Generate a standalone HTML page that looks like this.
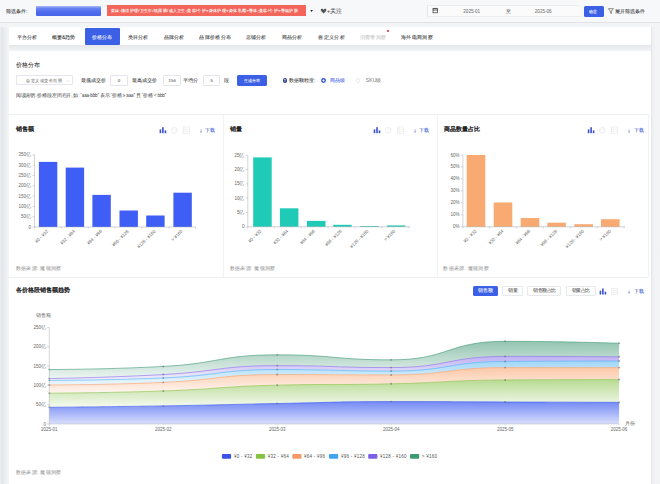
<!DOCTYPE html>
<html><head><meta charset="utf-8">
<style>
*{margin:0;padding:0;box-sizing:border-box}
html,body{width:660px;height:484px;overflow:hidden}
body{background:#f3f4f6;font-family:"Liberation Sans",sans-serif;position:relative;color:#333}
.a{position:absolute;white-space:nowrap}
.t{line-height:1}
</style></head><body>
<div class="a" style="left:0px;top:0px;width:660px;height:23px;background:#f7f8f9;border-bottom:1px solid #dfe1e6"></div>
<div class="a" style="left:36.2px;top:5.6px;width:64.8px;height:10.9px;background:linear-gradient(#a9b9f6,#6682f1 25%,#4f6cef 60%,#4a67ea);border-radius:1px;filter:blur(0.35px)"></div>
<div class="a" style="left:107px;top:5px;width:199px;height:11px;background:#f2665c"></div>
<div class="a" style="left:427.2px;top:5px;width:153px;height:12px;background:#fbfbfc;border-left:0.5px solid #e4e6e9;border-top:0.5px solid #eceef0;border-bottom:0.5px solid #eceef0"></div>
<div class="a" style="left:584px;top:6px;width:20px;height:10.5px;background:#3b5fe5;border-radius:1.5px"></div>
<div class="a" style="left:651px;top:27px;width:9px;height:457px;background:linear-gradient(to right,#e3e5e9,#eceef1 1.5px,#f2f3f5 3px,#f3f4f6)"></div>
<div class="a" style="left:0px;top:27px;width:9px;height:457px;background:linear-gradient(to right,#eef0f3,#e3e5ea 2px,#eceef1 5px,#f4f5f7 9px)"></div>
<div class="a" style="left:9px;top:27px;width:642px;height:18px;background:#fff"></div>
<div class="a" style="left:84.5px;top:28.4px;width:35.5px;height:16.5px;background:#3b5fe5;border-radius:1px"></div>
<div class="a" style="left:387px;top:30.2px;width:2px;height:2px;border-radius:1px;background:#d0243a"></div>
<div class="a" style="left:9px;top:45px;width:642px;height:5.8px;background:linear-gradient(#e5e6ea,#f3f4f6)"></div>
<div class="a" style="left:9px;top:50.8px;width:642px;height:434px;background:#fff"></div>
<div class="a" style="left:15.8px;top:75.4px;width:57px;height:10px;border:0.5px solid #e4e6eb;border-radius:1px"></div>
<div class="a" style="left:110.4px;top:75.3px;width:18px;height:10.3px;border:0.5px solid #e4e6eb;border-radius:1px"></div>
<div class="a" style="left:162.7px;top:75.3px;width:18px;height:10.3px;border:0.5px solid #e4e6eb;border-radius:1px"></div>
<div class="a" style="left:202.7px;top:75.3px;width:17.7px;height:10.3px;border:0.5px solid #e4e6eb;border-radius:1px"></div>
<div class="a" style="left:237.3px;top:75.3px;width:29.6px;height:10.3px;background:#3b5fe5;border-radius:1.5px"></div>
<div class="a" style="left:282.7px;top:78.2px;width:4.4px;height:4.4px;border-radius:50%;background:#2b3d8f"></div>
<div class="a" style="left:320.8px;top:78.0px;width:4.8px;height:4.8px;border-radius:50%;background:radial-gradient(circle,#fff 0,#fff 0.8px,#3d5fe0 1.2px)"></div>
<div class="a" style="left:355.6px;top:78.0px;width:4.7px;height:4.7px;border-radius:50%;border:0.5px solid #ececec"></div>
<div class="a" style="left:9px;top:114.3px;width:639px;height:0.6px;background:#eff0f3"></div>
<div class="a" style="left:9px;top:276.7px;width:639px;height:0.6px;background:#eff0f3"></div>
<div class="a" style="left:222.8px;top:114.3px;width:0.6px;height:162.6px;background:#f1f2f4"></div>
<div class="a" style="left:436.9px;top:114.3px;width:0.6px;height:162.6px;background:#f1f2f4"></div>
<div class="a" style="left:647.6px;top:114.3px;width:0.6px;height:162.6px;background:#f1f2f4"></div>
<div class="a" style="left:473px;top:285.6px;width:25.4px;height:10px;background:#3b5fe5;border-radius:1.5px"></div>
<div class="a" style="left:502.4px;top:285.6px;width:20.6px;height:10px;border:0.5px solid #e8e9ec;border-radius:1px"></div>
<div class="a" style="left:527.4px;top:285.6px;width:34px;height:10px;border:0.5px solid #e8e9ec;border-radius:1px"></div>
<div class="a" style="left:566px;top:285.6px;width:29.6px;height:10px;border:0.5px solid #e8e9ec;border-radius:1px"></div>
<svg class="a" style="left:0;top:0" width="660" height="484" viewBox="0 0 660 484" font-family="Liberation Sans, sans-serif">
<line x1="34.5" y1="154.8" x2="34.5" y2="227" stroke="#a0a4aa" stroke-width="0.45"/>
<line x1="32.5" y1="227.00" x2="34.5" y2="227.00" stroke="#a0a4aa" stroke-width="0.45"/>
<text x="31.1" y="228.50" text-anchor="end" font-size="4.5" fill="#666">0</text>
<line x1="32.5" y1="216.69" x2="34.5" y2="216.69" stroke="#a0a4aa" stroke-width="0.45"/>
<text x="31.1" y="218.19" text-anchor="end" font-size="4.5" fill="#666">50亿</text>
<line x1="32.5" y1="206.37" x2="34.5" y2="206.37" stroke="#a0a4aa" stroke-width="0.45"/>
<text x="31.1" y="207.87" text-anchor="end" font-size="4.5" fill="#666">100亿</text>
<line x1="32.5" y1="196.06" x2="34.5" y2="196.06" stroke="#a0a4aa" stroke-width="0.45"/>
<text x="31.1" y="197.56" text-anchor="end" font-size="4.5" fill="#666">150亿</text>
<line x1="32.5" y1="185.74" x2="34.5" y2="185.74" stroke="#a0a4aa" stroke-width="0.45"/>
<text x="31.1" y="187.24" text-anchor="end" font-size="4.5" fill="#666">200亿</text>
<line x1="32.5" y1="175.43" x2="34.5" y2="175.43" stroke="#a0a4aa" stroke-width="0.45"/>
<text x="31.1" y="176.93" text-anchor="end" font-size="4.5" fill="#666">250亿</text>
<line x1="32.5" y1="165.11" x2="34.5" y2="165.11" stroke="#a0a4aa" stroke-width="0.45"/>
<text x="31.1" y="166.61" text-anchor="end" font-size="4.5" fill="#666">300亿</text>
<line x1="32.5" y1="154.80" x2="34.5" y2="154.80" stroke="#a0a4aa" stroke-width="0.45"/>
<text x="31.1" y="156.30" text-anchor="end" font-size="4.5" fill="#666">350亿</text>
<rect x="38.9" y="161.9" width="18.4" height="65.10" fill="#3f5ef5"/>
<rect x="65.7" y="167.6" width="18.4" height="59.40" fill="#3f5ef5"/>
<rect x="92.4" y="194.9" width="18.4" height="32.10" fill="#3f5ef5"/>
<rect x="119.5" y="210.5" width="18.4" height="16.50" fill="#3f5ef5"/>
<rect x="146.2" y="215.5" width="18.4" height="11.50" fill="#3f5ef5"/>
<rect x="173.4" y="192.7" width="18.4" height="34.30" fill="#3f5ef5"/>
<line x1="34.5" y1="227" x2="196" y2="227" stroke="#a0a4aa" stroke-width="0.5"/>
<line x1="34.50" y1="227" x2="34.50" y2="228.5" stroke="#a0a4aa" stroke-width="0.45"/>
<line x1="61.35" y1="227" x2="61.35" y2="228.5" stroke="#a0a4aa" stroke-width="0.45"/>
<line x1="88.20" y1="227" x2="88.20" y2="228.5" stroke="#a0a4aa" stroke-width="0.45"/>
<line x1="115.05" y1="227" x2="115.05" y2="228.5" stroke="#a0a4aa" stroke-width="0.45"/>
<line x1="141.90" y1="227" x2="141.90" y2="228.5" stroke="#a0a4aa" stroke-width="0.45"/>
<line x1="168.75" y1="227" x2="168.75" y2="228.5" stroke="#a0a4aa" stroke-width="0.45"/>
<line x1="195.60" y1="227" x2="195.60" y2="228.5" stroke="#a0a4aa" stroke-width="0.45"/>
<text transform="translate(48.52,231.6) rotate(-45)" text-anchor="end" font-size="4.5" fill="#666">¥0 - ¥32</text>
<text transform="translate(75.38,231.6) rotate(-45)" text-anchor="end" font-size="4.5" fill="#666">¥32 - ¥64</text>
<text transform="translate(102.22,231.6) rotate(-45)" text-anchor="end" font-size="4.5" fill="#666">¥64 - ¥96</text>
<text transform="translate(129.08,231.6) rotate(-45)" text-anchor="end" font-size="4.5" fill="#666">¥96 - ¥128</text>
<text transform="translate(155.92,231.6) rotate(-45)" text-anchor="end" font-size="4.5" fill="#666">¥128 - ¥160</text>
<text transform="translate(182.78,231.6) rotate(-45)" text-anchor="end" font-size="4.5" fill="#666">&gt; ¥160</text>
<line x1="247.8" y1="155.2" x2="247.8" y2="226.8" stroke="#a0a4aa" stroke-width="0.45"/>
<line x1="245.8" y1="226.80" x2="247.8" y2="226.80" stroke="#a0a4aa" stroke-width="0.45"/>
<text x="244.4" y="228.30" text-anchor="end" font-size="4.5" fill="#666">0</text>
<line x1="245.8" y1="212.48" x2="247.8" y2="212.48" stroke="#a0a4aa" stroke-width="0.45"/>
<text x="244.4" y="213.98" text-anchor="end" font-size="4.5" fill="#666">5亿</text>
<line x1="245.8" y1="198.16" x2="247.8" y2="198.16" stroke="#a0a4aa" stroke-width="0.45"/>
<text x="244.4" y="199.66" text-anchor="end" font-size="4.5" fill="#666">10亿</text>
<line x1="245.8" y1="183.84" x2="247.8" y2="183.84" stroke="#a0a4aa" stroke-width="0.45"/>
<text x="244.4" y="185.34" text-anchor="end" font-size="4.5" fill="#666">15亿</text>
<line x1="245.8" y1="169.52" x2="247.8" y2="169.52" stroke="#a0a4aa" stroke-width="0.45"/>
<text x="244.4" y="171.02" text-anchor="end" font-size="4.5" fill="#666">20亿</text>
<line x1="245.8" y1="155.20" x2="247.8" y2="155.20" stroke="#a0a4aa" stroke-width="0.45"/>
<text x="244.4" y="156.70" text-anchor="end" font-size="4.5" fill="#666">25亿</text>
<rect x="253.2" y="157.4" width="18.5" height="69.40" fill="#1fcab6"/>
<rect x="279.9" y="208.3" width="18.5" height="18.50" fill="#1fcab6"/>
<rect x="307" y="220.9" width="18.5" height="5.90" fill="#1fcab6"/>
<rect x="333.2" y="224.8" width="18.5" height="2.00" fill="#1fcab6"/>
<rect x="360.2" y="226" width="18.5" height="0.80" fill="#1fcab6"/>
<rect x="386.9" y="225.4" width="18.5" height="1.40" fill="#1fcab6"/>
<line x1="247.8" y1="226.8" x2="410.4" y2="226.8" stroke="#a0a4aa" stroke-width="0.5"/>
<line x1="247.80" y1="226.8" x2="247.80" y2="228.3" stroke="#a0a4aa" stroke-width="0.45"/>
<line x1="274.55" y1="226.8" x2="274.55" y2="228.3" stroke="#a0a4aa" stroke-width="0.45"/>
<line x1="301.30" y1="226.8" x2="301.30" y2="228.3" stroke="#a0a4aa" stroke-width="0.45"/>
<line x1="328.05" y1="226.8" x2="328.05" y2="228.3" stroke="#a0a4aa" stroke-width="0.45"/>
<line x1="354.80" y1="226.8" x2="354.80" y2="228.3" stroke="#a0a4aa" stroke-width="0.45"/>
<line x1="381.55" y1="226.8" x2="381.55" y2="228.3" stroke="#a0a4aa" stroke-width="0.45"/>
<line x1="408.30" y1="226.8" x2="408.30" y2="228.3" stroke="#a0a4aa" stroke-width="0.45"/>
<text transform="translate(261.78,231.4) rotate(-45)" text-anchor="end" font-size="4.5" fill="#666">¥0 - ¥32</text>
<text transform="translate(288.53,231.4) rotate(-45)" text-anchor="end" font-size="4.5" fill="#666">¥32 - ¥64</text>
<text transform="translate(315.28,231.4) rotate(-45)" text-anchor="end" font-size="4.5" fill="#666">¥64 - ¥96</text>
<text transform="translate(342.03,231.4) rotate(-45)" text-anchor="end" font-size="4.5" fill="#666">¥96 - ¥128</text>
<text transform="translate(368.78,231.4) rotate(-45)" text-anchor="end" font-size="4.5" fill="#666">¥128 - ¥160</text>
<text transform="translate(395.53,231.4) rotate(-45)" text-anchor="end" font-size="4.5" fill="#666">&gt; ¥160</text>
<line x1="462.9" y1="155" x2="462.9" y2="226.8" stroke="#a0a4aa" stroke-width="0.45"/>
<line x1="460.9" y1="226.80" x2="462.9" y2="226.80" stroke="#a0a4aa" stroke-width="0.45"/>
<text x="459.5" y="228.30" text-anchor="end" font-size="4.5" fill="#666">0%</text>
<line x1="460.9" y1="214.83" x2="462.9" y2="214.83" stroke="#a0a4aa" stroke-width="0.45"/>
<text x="459.5" y="216.33" text-anchor="end" font-size="4.5" fill="#666">10%</text>
<line x1="460.9" y1="202.87" x2="462.9" y2="202.87" stroke="#a0a4aa" stroke-width="0.45"/>
<text x="459.5" y="204.37" text-anchor="end" font-size="4.5" fill="#666">20%</text>
<line x1="460.9" y1="190.90" x2="462.9" y2="190.90" stroke="#a0a4aa" stroke-width="0.45"/>
<text x="459.5" y="192.40" text-anchor="end" font-size="4.5" fill="#666">30%</text>
<line x1="460.9" y1="178.93" x2="462.9" y2="178.93" stroke="#a0a4aa" stroke-width="0.45"/>
<text x="459.5" y="180.43" text-anchor="end" font-size="4.5" fill="#666">40%</text>
<line x1="460.9" y1="166.97" x2="462.9" y2="166.97" stroke="#a0a4aa" stroke-width="0.45"/>
<text x="459.5" y="168.47" text-anchor="end" font-size="4.5" fill="#666">50%</text>
<line x1="460.9" y1="155.00" x2="462.9" y2="155.00" stroke="#a0a4aa" stroke-width="0.45"/>
<text x="459.5" y="156.50" text-anchor="end" font-size="4.5" fill="#666">60%</text>
<rect x="466.7" y="155" width="18.6" height="71.80" fill="#f8aa72"/>
<rect x="493.7" y="202.5" width="18.6" height="24.30" fill="#f8aa72"/>
<rect x="520.7" y="218" width="18.6" height="8.80" fill="#f8aa72"/>
<rect x="547.3" y="222.7" width="18.6" height="4.10" fill="#f8aa72"/>
<rect x="574.3" y="224.2" width="18.6" height="2.60" fill="#f8aa72"/>
<rect x="601" y="219.2" width="18.6" height="7.60" fill="#f8aa72"/>
<line x1="462.9" y1="226.8" x2="625" y2="226.8" stroke="#a0a4aa" stroke-width="0.5"/>
<line x1="462.90" y1="226.8" x2="462.90" y2="228.3" stroke="#a0a4aa" stroke-width="0.45"/>
<line x1="489.75" y1="226.8" x2="489.75" y2="228.3" stroke="#a0a4aa" stroke-width="0.45"/>
<line x1="516.60" y1="226.8" x2="516.60" y2="228.3" stroke="#a0a4aa" stroke-width="0.45"/>
<line x1="543.45" y1="226.8" x2="543.45" y2="228.3" stroke="#a0a4aa" stroke-width="0.45"/>
<line x1="570.30" y1="226.8" x2="570.30" y2="228.3" stroke="#a0a4aa" stroke-width="0.45"/>
<line x1="597.15" y1="226.8" x2="597.15" y2="228.3" stroke="#a0a4aa" stroke-width="0.45"/>
<line x1="624.00" y1="226.8" x2="624.00" y2="228.3" stroke="#a0a4aa" stroke-width="0.45"/>
<text transform="translate(476.93,231.4) rotate(-45)" text-anchor="end" font-size="4.5" fill="#666">¥0 - ¥32</text>
<text transform="translate(503.77,231.4) rotate(-45)" text-anchor="end" font-size="4.5" fill="#666">¥32 - ¥64</text>
<text transform="translate(530.62,231.4) rotate(-45)" text-anchor="end" font-size="4.5" fill="#666">¥64 - ¥96</text>
<text transform="translate(557.48,231.4) rotate(-45)" text-anchor="end" font-size="4.5" fill="#666">¥96 - ¥128</text>
<text transform="translate(584.33,231.4) rotate(-45)" text-anchor="end" font-size="4.5" fill="#666">¥128 - ¥160</text>
<text transform="translate(611.18,231.4) rotate(-45)" text-anchor="end" font-size="4.5" fill="#666">&gt; ¥160</text>
<defs>
<linearGradient id="g0" x1="0" y1="0" x2="0" y2="1"><stop offset="0" stop-color="#3d5cf0" stop-opacity="0.72"/><stop offset="1" stop-color="#3d5cf0" stop-opacity="0.2"/></linearGradient>
<linearGradient id="g1" x1="0" y1="0" x2="0" y2="1"><stop offset="0" stop-color="#8cc44f" stop-opacity="0.62"/><stop offset="1" stop-color="#8cc44f" stop-opacity="0.08"/></linearGradient>
<linearGradient id="g2" x1="0" y1="0" x2="0" y2="1"><stop offset="0" stop-color="#f9a46e" stop-opacity="0.6"/><stop offset="1" stop-color="#f9a46e" stop-opacity="0.1"/></linearGradient>
<linearGradient id="g3" x1="0" y1="0" x2="0" y2="1"><stop offset="0" stop-color="#52b4f2" stop-opacity="0.55"/><stop offset="1" stop-color="#52b4f2" stop-opacity="0.1"/></linearGradient>
<linearGradient id="g4" x1="0" y1="0" x2="0" y2="1"><stop offset="0" stop-color="#8c70ea" stop-opacity="0.55"/><stop offset="1" stop-color="#8c70ea" stop-opacity="0.1"/></linearGradient>
<linearGradient id="g5" x1="0" y1="0" x2="0" y2="1"><stop offset="0" stop-color="#4c9e7e" stop-opacity="0.6"/><stop offset="1" stop-color="#4c9e7e" stop-opacity="0.1"/></linearGradient>
</defs>
<path d="M49.30,407.27 C49.30,407.27 106.28,406.81 163.26,405.88 C220.24,404.94 220.24,404.59 277.22,403.52 C334.20,402.45 334.20,401.59 391.18,401.59 C448.16,401.59 448.16,401.78 505.14,401.98 C562.12,402.17 619.10,402.36 619.10,402.36 L619.10,424 L49.30,424 Z" fill="url(#g0)"/>
<path d="M49.30,393.17 C49.30,393.17 106.31,392.96 163.26,390.96 C220.27,388.96 220.21,386.52 277.22,385.17 C334.17,383.81 334.21,385.12 391.18,383.81 C448.17,382.51 448.14,380.34 505.14,379.95 C562.10,379.56 619.10,379.56 619.10,379.56 L619.10,402.36 C619.10,402.36 562.12,402.17 505.14,401.98 C448.16,401.78 448.16,401.59 391.18,401.59 C334.20,401.59 334.20,402.45 277.22,403.52 C220.24,404.59 220.24,404.94 163.26,405.88 C106.28,406.81 49.30,407.27 49.30,407.27 Z" fill="url(#g1)"/>
<path d="M49.30,384.97 C49.30,384.97 106.34,384.95 163.26,382.35 C220.30,379.74 220.17,374.54 277.22,374.54 C334.13,374.54 334.26,374.93 391.18,374.93 C448.22,374.93 448.10,367.59 505.14,367.59 C562.06,367.59 619.10,367.59 619.10,367.59 L619.10,379.56 C619.10,379.56 562.10,379.56 505.14,379.95 C448.14,380.34 448.17,382.51 391.18,383.81 C334.21,385.12 334.17,383.81 277.22,385.17 C220.21,386.52 220.27,388.96 163.26,390.96 C106.31,392.96 49.30,393.17 49.30,393.17 Z" fill="url(#g2)"/>
<path d="M49.30,380.34 C49.30,380.34 106.35,380.34 163.26,377.94 C220.31,375.54 220.17,369.52 277.22,369.52 C334.13,369.52 334.30,371.06 391.18,371.06 C448.26,371.06 448.06,361.79 505.14,361.40 C562.02,361.02 619.10,361.02 619.10,361.02 L619.10,367.59 C619.10,367.59 562.06,367.59 505.14,367.59 C448.10,367.59 448.22,374.93 391.18,374.93 C334.26,374.93 334.13,374.54 277.22,374.54 C220.17,374.54 220.30,379.74 163.26,382.35 C106.34,384.95 49.30,384.97 49.30,384.97 Z" fill="url(#g3)"/>
<path d="M49.30,378.56 C49.30,378.56 106.35,377.76 163.26,374.54 C220.31,371.31 220.16,365.65 277.22,365.65 C334.12,365.65 334.33,367.59 391.18,367.59 C448.29,367.59 448.02,356.38 505.14,356.38 C561.98,356.38 619.10,356.77 619.10,356.77 L619.10,361.02 C619.10,361.02 562.02,361.02 505.14,361.40 C448.06,361.79 448.26,371.06 391.18,371.06 C334.30,371.06 334.13,369.52 277.22,369.52 C220.17,369.52 220.31,375.54 163.26,377.94 C106.35,380.34 49.30,380.34 49.30,380.34 Z" fill="url(#g4)"/>
<path d="M49.30,369.52 C49.30,369.52 106.42,369.52 163.26,366.43 C220.38,363.32 220.12,354.83 277.22,354.83 C334.08,354.83 334.54,359.86 391.18,359.86 C448.50,359.86 447.79,341.31 505.14,341.31 C561.75,341.31 619.10,343.24 619.10,343.24 L619.10,356.77 C619.10,356.77 561.98,356.38 505.14,356.38 C448.02,356.38 448.29,367.59 391.18,367.59 C334.33,367.59 334.12,365.65 277.22,365.65 C220.16,365.65 220.31,371.31 163.26,374.54 C106.35,377.76 49.30,378.56 49.30,378.56 Z" fill="url(#g5)"/>
<path d="M49.30,407.27 C49.30,407.27 106.28,406.81 163.26,405.88 C220.24,404.94 220.24,404.59 277.22,403.52 C334.20,402.45 334.20,401.59 391.18,401.59 C448.16,401.59 448.16,401.78 505.14,401.98 C562.12,402.17 619.10,402.36 619.10,402.36" fill="none" stroke="#3d5cf0" stroke-width="0.75" stroke-opacity="0.85"/>
<circle cx="49.30" cy="407.27" r="0.95" fill="#55606e" fill-opacity="0.55"/>
<circle cx="163.26" cy="405.88" r="0.95" fill="#55606e" fill-opacity="0.55"/>
<circle cx="277.22" cy="403.52" r="0.95" fill="#55606e" fill-opacity="0.55"/>
<circle cx="391.18" cy="401.59" r="0.95" fill="#55606e" fill-opacity="0.55"/>
<circle cx="505.14" cy="401.98" r="0.95" fill="#55606e" fill-opacity="0.55"/>
<circle cx="619.10" cy="402.36" r="0.95" fill="#55606e" fill-opacity="0.55"/>
<path d="M49.30,393.17 C49.30,393.17 106.31,392.96 163.26,390.96 C220.27,388.96 220.21,386.52 277.22,385.17 C334.17,383.81 334.21,385.12 391.18,383.81 C448.17,382.51 448.14,380.34 505.14,379.95 C562.10,379.56 619.10,379.56 619.10,379.56" fill="none" stroke="#8cc44f" stroke-width="0.75" stroke-opacity="0.85"/>
<circle cx="49.30" cy="393.17" r="0.95" fill="#55606e" fill-opacity="0.55"/>
<circle cx="163.26" cy="390.96" r="0.95" fill="#55606e" fill-opacity="0.55"/>
<circle cx="277.22" cy="385.17" r="0.95" fill="#55606e" fill-opacity="0.55"/>
<circle cx="391.18" cy="383.81" r="0.95" fill="#55606e" fill-opacity="0.55"/>
<circle cx="505.14" cy="379.95" r="0.95" fill="#55606e" fill-opacity="0.55"/>
<circle cx="619.10" cy="379.56" r="0.95" fill="#55606e" fill-opacity="0.55"/>
<path d="M49.30,384.97 C49.30,384.97 106.34,384.95 163.26,382.35 C220.30,379.74 220.17,374.54 277.22,374.54 C334.13,374.54 334.26,374.93 391.18,374.93 C448.22,374.93 448.10,367.59 505.14,367.59 C562.06,367.59 619.10,367.59 619.10,367.59" fill="none" stroke="#f9a46e" stroke-width="0.75" stroke-opacity="0.85"/>
<circle cx="49.30" cy="384.97" r="0.95" fill="#55606e" fill-opacity="0.55"/>
<circle cx="163.26" cy="382.35" r="0.95" fill="#55606e" fill-opacity="0.55"/>
<circle cx="277.22" cy="374.54" r="0.95" fill="#55606e" fill-opacity="0.55"/>
<circle cx="391.18" cy="374.93" r="0.95" fill="#55606e" fill-opacity="0.55"/>
<circle cx="505.14" cy="367.59" r="0.95" fill="#55606e" fill-opacity="0.55"/>
<circle cx="619.10" cy="367.59" r="0.95" fill="#55606e" fill-opacity="0.55"/>
<path d="M49.30,380.34 C49.30,380.34 106.35,380.34 163.26,377.94 C220.31,375.54 220.17,369.52 277.22,369.52 C334.13,369.52 334.30,371.06 391.18,371.06 C448.26,371.06 448.06,361.79 505.14,361.40 C562.02,361.02 619.10,361.02 619.10,361.02" fill="none" stroke="#52b4f2" stroke-width="0.75" stroke-opacity="0.85"/>
<circle cx="49.30" cy="380.34" r="0.95" fill="#55606e" fill-opacity="0.55"/>
<circle cx="163.26" cy="377.94" r="0.95" fill="#55606e" fill-opacity="0.55"/>
<circle cx="277.22" cy="369.52" r="0.95" fill="#55606e" fill-opacity="0.55"/>
<circle cx="391.18" cy="371.06" r="0.95" fill="#55606e" fill-opacity="0.55"/>
<circle cx="505.14" cy="361.40" r="0.95" fill="#55606e" fill-opacity="0.55"/>
<circle cx="619.10" cy="361.02" r="0.95" fill="#55606e" fill-opacity="0.55"/>
<path d="M49.30,378.56 C49.30,378.56 106.35,377.76 163.26,374.54 C220.31,371.31 220.16,365.65 277.22,365.65 C334.12,365.65 334.33,367.59 391.18,367.59 C448.29,367.59 448.02,356.38 505.14,356.38 C561.98,356.38 619.10,356.77 619.10,356.77" fill="none" stroke="#8c70ea" stroke-width="0.75" stroke-opacity="0.85"/>
<circle cx="49.30" cy="378.56" r="0.95" fill="#55606e" fill-opacity="0.55"/>
<circle cx="163.26" cy="374.54" r="0.95" fill="#55606e" fill-opacity="0.55"/>
<circle cx="277.22" cy="365.65" r="0.95" fill="#55606e" fill-opacity="0.55"/>
<circle cx="391.18" cy="367.59" r="0.95" fill="#55606e" fill-opacity="0.55"/>
<circle cx="505.14" cy="356.38" r="0.95" fill="#55606e" fill-opacity="0.55"/>
<circle cx="619.10" cy="356.77" r="0.95" fill="#55606e" fill-opacity="0.55"/>
<path d="M49.30,369.52 C49.30,369.52 106.42,369.52 163.26,366.43 C220.38,363.32 220.12,354.83 277.22,354.83 C334.08,354.83 334.54,359.86 391.18,359.86 C448.50,359.86 447.79,341.31 505.14,341.31 C561.75,341.31 619.10,343.24 619.10,343.24" fill="none" stroke="#4c9e7e" stroke-width="0.75" stroke-opacity="0.85"/>
<circle cx="49.30" cy="369.52" r="0.95" fill="#55606e" fill-opacity="0.55"/>
<circle cx="163.26" cy="366.43" r="0.95" fill="#55606e" fill-opacity="0.55"/>
<circle cx="277.22" cy="354.83" r="0.95" fill="#55606e" fill-opacity="0.55"/>
<circle cx="391.18" cy="359.86" r="0.95" fill="#55606e" fill-opacity="0.55"/>
<circle cx="505.14" cy="341.31" r="0.95" fill="#55606e" fill-opacity="0.55"/>
<circle cx="619.10" cy="343.24" r="0.95" fill="#55606e" fill-opacity="0.55"/>
<line x1="49.3" y1="327.4" x2="49.3" y2="424" stroke="#a0a4aa" stroke-width="0.45"/>
<line x1="47.3" y1="424.00" x2="49.3" y2="424.00" stroke="#a0a4aa" stroke-width="0.45"/>
<text x="46.099999999999994" y="425.50" text-anchor="end" font-size="4.5" fill="#666">0</text>
<line x1="47.3" y1="404.68" x2="49.3" y2="404.68" stroke="#a0a4aa" stroke-width="0.45"/>
<text x="46.099999999999994" y="406.18" text-anchor="end" font-size="4.5" fill="#666">50亿</text>
<line x1="47.3" y1="385.36" x2="49.3" y2="385.36" stroke="#a0a4aa" stroke-width="0.45"/>
<text x="46.099999999999994" y="386.86" text-anchor="end" font-size="4.5" fill="#666">100亿</text>
<line x1="47.3" y1="366.04" x2="49.3" y2="366.04" stroke="#a0a4aa" stroke-width="0.45"/>
<text x="46.099999999999994" y="367.54" text-anchor="end" font-size="4.5" fill="#666">150亿</text>
<line x1="47.3" y1="346.72" x2="49.3" y2="346.72" stroke="#a0a4aa" stroke-width="0.45"/>
<text x="46.099999999999994" y="348.22" text-anchor="end" font-size="4.5" fill="#666">200亿</text>
<line x1="47.3" y1="327.40" x2="49.3" y2="327.40" stroke="#a0a4aa" stroke-width="0.45"/>
<text x="46.099999999999994" y="328.90" text-anchor="end" font-size="4.5" fill="#666">250亿</text>
<line x1="49.3" y1="424" x2="619.0999999999999" y2="424" stroke="#bfc3c9" stroke-width="0.6"/>
<line x1="49.30" y1="424" x2="49.30" y2="425.5" stroke="#bfc3c9" stroke-width="0.5"/>
<text x="49.30" y="430.6" text-anchor="middle" font-size="4.5" fill="#666">2025-01</text>
<line x1="163.26" y1="424" x2="163.26" y2="425.5" stroke="#bfc3c9" stroke-width="0.5"/>
<text x="163.26" y="430.6" text-anchor="middle" font-size="4.5" fill="#666">2025-02</text>
<line x1="277.22" y1="424" x2="277.22" y2="425.5" stroke="#bfc3c9" stroke-width="0.5"/>
<text x="277.22" y="430.6" text-anchor="middle" font-size="4.5" fill="#666">2025-03</text>
<line x1="391.18" y1="424" x2="391.18" y2="425.5" stroke="#bfc3c9" stroke-width="0.5"/>
<text x="391.18" y="430.6" text-anchor="middle" font-size="4.5" fill="#666">2025-04</text>
<line x1="505.14" y1="424" x2="505.14" y2="425.5" stroke="#bfc3c9" stroke-width="0.5"/>
<text x="505.14" y="430.6" text-anchor="middle" font-size="4.5" fill="#666">2025-05</text>
<line x1="619.10" y1="424" x2="619.10" y2="425.5" stroke="#bfc3c9" stroke-width="0.5"/>
<text x="619.10" y="430.6" text-anchor="middle" font-size="4.5" fill="#666">2025-06</text>
<text x="36.2" y="317.1" font-size="4.5" fill="#666">销售额</text>
<text x="624.8" y="424.6" font-size="4.5" fill="#666">月份</text>
<rect x="221.9" y="454" width="9.2" height="4.8" rx="1" fill="#3c52e6"/>
<text x="234" y="458.3" font-size="4.5" fill="#555" letter-spacing="0.25">¥0 - ¥32</text>
<rect x="255.9" y="454" width="9.2" height="4.8" rx="1" fill="#86c242"/>
<text x="267.7" y="458.3" font-size="4.5" fill="#555" letter-spacing="0.25">¥32 - ¥64</text>
<rect x="292.3" y="454" width="9.2" height="4.8" rx="1" fill="#f59a66"/>
<text x="304" y="458.3" font-size="4.5" fill="#555" letter-spacing="0.25">¥64 - ¥96</text>
<rect x="329" y="454" width="9.2" height="4.8" rx="1" fill="#3ea5ee"/>
<text x="341" y="458.3" font-size="4.5" fill="#555" letter-spacing="0.25">¥96 - ¥128</text>
<rect x="368.2" y="454" width="9.2" height="4.8" rx="1" fill="#7b5fe6"/>
<text x="380" y="458.3" font-size="4.5" fill="#555" letter-spacing="0.25">¥128 - ¥160</text>
<rect x="410" y="454" width="9.2" height="4.8" rx="1" fill="#3d9a70"/>
<text x="421.8" y="458.3" font-size="4.5" fill="#555" letter-spacing="0.25">&gt; ¥160</text>
<rect x="159.6" y="129.4" width="1.6" height="3.8" fill="#3a52cc"/>
<rect x="162.1" y="127.2" width="1.6" height="6" fill="#3a52cc"/>
<rect x="164.6" y="130.4" width="1.6" height="2.8" fill="#3a52cc"/>
<circle cx="174.2" cy="130.2" r="2.8" fill="none" stroke="#dedede" stroke-width="0.6"/>
<path d="M174.4,128.4 V130.2 H176.0" fill="none" stroke="#e4e4e4" stroke-width="0.5"/>
<rect x="183.2" y="126.9" width="6.2" height="6.6" fill="none" stroke="#e4e4e4" stroke-width="0.55"/>
<line x1="183.2" y1="129.10" x2="189.39999999999998" y2="129.10" stroke="#e4e4e4" stroke-width="0.5"/>
<line x1="183.2" y1="131.30" x2="189.39999999999998" y2="131.30" stroke="#e4e4e4" stroke-width="0.5"/>
<line x1="185.2" y1="126.9" x2="185.2" y2="133.5" stroke="#e8e8e8" stroke-width="0.4"/>
<rect x="373.7" y="129.4" width="1.6" height="3.8" fill="#3a52cc"/>
<rect x="376.2" y="127.2" width="1.6" height="6" fill="#3a52cc"/>
<rect x="378.7" y="130.4" width="1.6" height="2.8" fill="#3a52cc"/>
<circle cx="388.3" cy="130.2" r="2.8" fill="none" stroke="#dedede" stroke-width="0.6"/>
<path d="M388.5,128.4 V130.2 H390.09999999999997" fill="none" stroke="#e4e4e4" stroke-width="0.5"/>
<rect x="397.3" y="126.9" width="6.2" height="6.6" fill="none" stroke="#e4e4e4" stroke-width="0.55"/>
<line x1="397.3" y1="129.10" x2="403.5" y2="129.10" stroke="#e4e4e4" stroke-width="0.5"/>
<line x1="397.3" y1="131.30" x2="403.5" y2="131.30" stroke="#e4e4e4" stroke-width="0.5"/>
<line x1="399.3" y1="126.9" x2="399.3" y2="133.5" stroke="#e8e8e8" stroke-width="0.4"/>
<rect x="587.8" y="129.4" width="1.6" height="3.8" fill="#3a52cc"/>
<rect x="590.3" y="127.2" width="1.6" height="6" fill="#3a52cc"/>
<rect x="592.8" y="130.4" width="1.6" height="2.8" fill="#3a52cc"/>
<circle cx="602.4" cy="130.2" r="2.8" fill="none" stroke="#dedede" stroke-width="0.6"/>
<path d="M602.5999999999999,128.4 V130.2 H604.1999999999999" fill="none" stroke="#e4e4e4" stroke-width="0.5"/>
<rect x="611.4" y="126.9" width="6.2" height="6.6" fill="none" stroke="#e4e4e4" stroke-width="0.55"/>
<line x1="611.4" y1="129.10" x2="617.6" y2="129.10" stroke="#e4e4e4" stroke-width="0.5"/>
<line x1="611.4" y1="131.30" x2="617.6" y2="131.30" stroke="#e4e4e4" stroke-width="0.5"/>
<line x1="613.4" y1="126.9" x2="613.4" y2="133.5" stroke="#e8e8e8" stroke-width="0.4"/>
<rect x="599.6" y="290.7" width="1.6" height="3.8" fill="#3a52cc"/>
<rect x="602.1" y="288.5" width="1.6" height="6" fill="#3a52cc"/>
<rect x="604.6" y="291.7" width="1.6" height="2.8" fill="#3a52cc"/>
<rect x="611.5" y="288.2" width="6.2" height="6.6" fill="none" stroke="#e4e4e4" stroke-width="0.55"/>
<line x1="611.5" y1="290.40" x2="617.7" y2="290.40" stroke="#e4e4e4" stroke-width="0.5"/>
<line x1="611.5" y1="292.60" x2="617.7" y2="292.60" stroke="#e4e4e4" stroke-width="0.5"/>
<line x1="613.5" y1="288.2" x2="613.5" y2="294.8" stroke="#e8e8e8" stroke-width="0.4"/>
<text x="5.96" y="12.92" font-size="5.2" fill="#333" stroke="#333" stroke-width="0.06">筛选条件:</text>
<text x="110.79" y="12.08" font-size="4.4" fill="#fff" stroke="#fff" stroke-width="0.08" letter-spacing="0.304">类目:清洁护理/卫生巾/纸尿裤/成人卫生;美容/个护&gt;身体护理&gt;身体乳霜&gt;香体;美容/个护&gt;香氛护肤</text>
<path d="M310.3,10.1 H312.9 L311.6,11.9 Z" fill="#222"/>
<path d="M323.6,13.6 L321.3,11.3 C320.4,10.4 320.6,8.7 321.9,8.7 C322.7,8.7 323.2,9.2 323.6,9.7 C324,9.2 324.5,8.7 325.3,8.7 C326.6,8.7 326.8,10.4 325.9,11.3 Z" fill="#555"/>
<text x="327.04" y="13.07" font-size="5.5" fill="#444" stroke="#444" stroke-width="0.06">+关注</text>
<rect x="433" y="8.6" width="4.6" height="4.2" fill="none" stroke="#333" stroke-width="0.7"/><line x1="433" y1="10" x2="437.6" y2="10" stroke="#333" stroke-width="0.8"/><line x1="434.3" y1="7.8" x2="434.3" y2="9" stroke="#333" stroke-width="0.5"/><line x1="436.3" y1="7.8" x2="436.3" y2="9" stroke="#333" stroke-width="0.5"/>
<text x="463.28" y="12.59" font-size="4.6" fill="#777" stroke="#777" stroke-width="0.06">2025-01</text>
<text x="506.26" y="12.72" font-size="5" fill="#555" stroke="#555" stroke-width="0.06">至</text>
<text x="534.78" y="12.59" font-size="4.6" fill="#777" stroke="#777" stroke-width="0.06">2025-06</text>
<text x="588.79" y="12.58" font-size="4.4" fill="#fff" stroke="#fff" stroke-width="0.06">确定</text>
<path d="M608.4,8.7 H613.4 L611.4,11.2 V13.4 L610.4,12.8 V11.2 Z" fill="none" stroke="#444" stroke-width="0.6"/>
<text x="614.76" y="12.92" font-size="5.2" fill="#333" stroke="#333" stroke-width="0.06">展开筛选条件</text>
<text x="16.75" y="38.73" font-size="5.35" fill="#333" stroke="#333" stroke-width="0.06">平台分析</text>
<text x="51.75" y="38.73" font-size="5.35" fill="#333" stroke="#333" stroke-width="0.06">概要&amp;趋势</text>
<text x="91.55" y="38.73" font-size="5.35" fill="#fff" stroke="#fff" stroke-width="0.06">价格分布</text>
<text x="127.75" y="38.73" font-size="5.35" fill="#333" stroke="#333" stroke-width="0.06">类目分析</text>
<text x="163.75" y="38.73" font-size="5.35" fill="#333" stroke="#333" stroke-width="0.06">品牌分析</text>
<text x="199.25" y="38.73" font-size="5.35" fill="#333" stroke="#333" stroke-width="0.06" letter-spacing="0.350">品牌价格分布</text>
<text x="245.95" y="38.73" font-size="5.35" fill="#333" stroke="#333" stroke-width="0.06">店铺分析</text>
<text x="282.05" y="38.73" font-size="5.35" fill="#333" stroke="#333" stroke-width="0.06">商品分析</text>
<text x="318.25" y="38.73" font-size="5.35" fill="#333" stroke="#333" stroke-width="0.06" letter-spacing="0.350">自定义分析</text>
<text x="359.55" y="38.73" font-size="5.35" fill="#c8c8c8" stroke="#c8c8c8" stroke-width="0.06" letter-spacing="0.350">消费者洞察</text>
<text x="400.95" y="38.73" font-size="5.35" fill="#333" stroke="#333" stroke-width="0.06" letter-spacing="0.350">海外电商洞察</text>
<text x="15.81" y="66.57" font-size="6.1" fill="#333" stroke="#333" stroke-width="0.06">价格分布</text>
<text x="26.49" y="81.78" font-size="4.47" fill="#777" stroke="#777" stroke-width="0.05" letter-spacing="0.470">自定义成交价范围</text>
<text x="65.79" y="81.72" font-size="4.4" fill="#bbb" stroke="#bbb" stroke-width="0.06">⌵</text>
<text x="80.66" y="82.12" font-size="5.2" fill="#444" stroke="#444" stroke-width="0.06">最低成交价</text>
<text x="117.79" y="81.92" font-size="4.4" fill="#666" stroke="#666" stroke-width="0.06">0</text>
<text x="132.15" y="82.12" font-size="5.3" fill="#444" stroke="#444" stroke-width="0.06">最高成交价</text>
<text x="168.59" y="81.92" font-size="4.4" fill="#666" stroke="#666" stroke-width="0.06">156</text>
<text x="183.36" y="82.12" font-size="5.2" fill="#444" stroke="#444" stroke-width="0.06">平均分</text>
<text x="210.39" y="81.92" font-size="4.4" fill="#666" stroke="#666" stroke-width="0.06">5</text>
<text x="224.06" y="82.12" font-size="5.0" fill="#444" stroke="#444" stroke-width="0.06">段</text>
<text x="252.10" y="81.78" font-size="4.3" fill="#fff" stroke="#fff" stroke-width="0.05" text-anchor="middle">生成分布</text>
<text x="284.9" y="81.9" font-size="3.4" fill="#fff" text-anchor="middle" font-weight="bold">?</text>
<text x="288.96" y="82.12" font-size="5.2" fill="#444" stroke="#444" stroke-width="0.06">数据颗粒度:</text>
<text x="329.76" y="82.12" font-size="5.17" fill="#4a6ae8" stroke="#4a6ae8" stroke-width="0.06">商品级</text>
<text x="365.76" y="82.12" font-size="5.2" fill="#888" stroke="#888" stroke-width="0.05">SKU级</text>
<text x="15.79" y="96.92" font-size="4.55" fill="#555" stroke="#555" stroke-width="0.05" letter-spacing="-0.158">阅读说明: 价格段左闭右开, 如: “aaa-bbb” 表示 “价格 ≥ aaa” 且 “价格 &lt; bbb”</text>
<text x="15.50" y="130.57" font-size="6.3" fill="#222" stroke="#222" stroke-width="0.3">销售额</text>
<text x="230.02" y="130.57" font-size="6.0" fill="#222" stroke="#222" stroke-width="0.3">销量</text>
<text x="443.51" y="130.57" font-size="6.2" fill="#222" stroke="#222" stroke-width="0.3">商品数量占比</text>
<text x="15.76" y="270.33" font-size="5.1" fill="#a0a0a0" stroke="#a0a0a0" stroke-width="0.06" letter-spacing="0.300">数据来源: 魔镜洞察</text>
<text x="229.76" y="270.33" font-size="5.1" fill="#a0a0a0" stroke="#a0a0a0" stroke-width="0.06" letter-spacing="0.300">数据来源: 魔镜洞察</text>
<text x="443.26" y="270.33" font-size="5.1" fill="#a0a0a0" stroke="#a0a0a0" stroke-width="0.06" letter-spacing="0.300">数据来源: 魔镜洞察</text>
<text x="199.99" y="131.52" font-size="4.4" fill="#4a5fd0" stroke="#4a5fd0" stroke-width="0.06">⤓</text>
<text x="205.34" y="131.72" font-size="5.45" fill="#4a5fd0" stroke="#4a5fd0" stroke-width="0.06">下载</text>
<text x="414.09" y="131.52" font-size="4.4" fill="#4a5fd0" stroke="#4a5fd0" stroke-width="0.06">⤓</text>
<text x="419.44" y="131.72" font-size="5.45" fill="#4a5fd0" stroke="#4a5fd0" stroke-width="0.06">下载</text>
<text x="628.19" y="131.52" font-size="4.4" fill="#4a5fd0" stroke="#4a5fd0" stroke-width="0.06">⤓</text>
<text x="633.54" y="131.72" font-size="5.45" fill="#4a5fd0" stroke="#4a5fd0" stroke-width="0.06">下载</text>
<text x="628.19" y="293.02" font-size="4.4" fill="#4a5fd0" stroke="#4a5fd0" stroke-width="0.06">⤓</text>
<text x="633.54" y="293.23" font-size="5.45" fill="#4a5fd0" stroke="#4a5fd0" stroke-width="0.06">下载</text>
<text x="15.72" y="292.07" font-size="6.0" fill="#222" stroke="#222" stroke-width="0.3">各价格段销售额趋势</text>
<text x="15.76" y="474.43" font-size="5.1" fill="#a0a0a0" stroke="#a0a0a0" stroke-width="0.06" letter-spacing="0.300">数据来源: 魔镜洞察</text>
<text x="485.70" y="292.33" font-size="4.5" fill="#fff" stroke="#fff" stroke-width="0.05" text-anchor="middle">销售额</text>
<text x="512.70" y="292.33" font-size="4.5" fill="#555" stroke="#555" stroke-width="0.05" text-anchor="middle">销量</text>
<text x="544.40" y="292.33" font-size="4.5" fill="#555" stroke="#555" stroke-width="0.05" text-anchor="middle" letter-spacing="-0.500">销售额占比</text>
<text x="580.80" y="292.33" font-size="4.5" fill="#555" stroke="#555" stroke-width="0.05" text-anchor="middle" letter-spacing="-0.500">销量占比</text>
</svg>
</body></html>
